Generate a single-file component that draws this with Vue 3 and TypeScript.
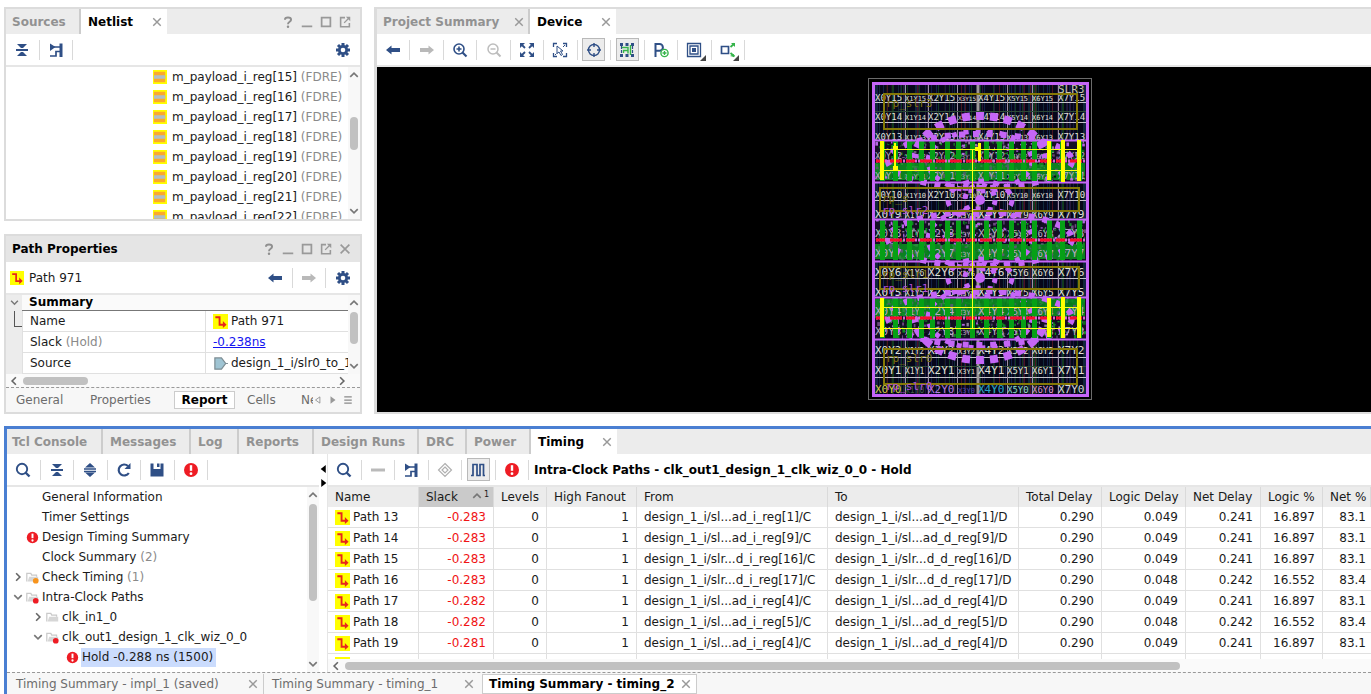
<script setup lang="ts">
import { h, ref } from 'vue'

const navy = '#2f4f86'
const glyphs: Record<string, string> = {
  collapse: `<path d="M3 2h10l-4 4H7zM3 14h10l-4-4H7z" fill="${navy}"/><path d="M2 8h12" stroke="${navy}" stroke-width="2"/>`,
  expand: `<path d="M8 1l5 4.500H3zM8 15l5-4.500H3z" fill="${navy}"/><path d="M2 7h12M2 9.500h12" stroke="${navy}" stroke-width="1.500"/>`,
  schematic: `<path d="M2 1.500l5.500 3.500L2 9z" fill="${navy}"/><path d="M6 5h7M2 14h6V9.500h5" fill="none" stroke="${navy}" stroke-width="1.700"/><path d="M13 1.500V15" stroke="${navy}" stroke-width="3"/>`,
  gear: `<path d="M8 1v14M1 8h14M3 3l10 10M13 3L3 13" stroke="${navy}" stroke-width="3"/><circle cx="8" cy="8" r="5" fill="${navy}"/><circle cx="8" cy="8" r="2.300" fill="#fff"/>`,
  back: `<path d="M1 8l5.500-4.500V6H15v4H6.500v2.500z" fill="${navy}"/>`,
  forward: `<path d="M15 8L9.500 3.500V6H1v4h8.500v2.500z" fill="#b9b9b9"/>`,
  zoomIn: `<circle cx="7" cy="7" r="5" fill="none" stroke="${navy}" stroke-width="1.600"/><path d="M4.500 7h5M7 4.500v5" stroke="${navy}" stroke-width="1.600"/><path d="M10.500 10.500l4 4" stroke="${navy}" stroke-width="2.200"/>`,
  zoomOut: `<circle cx="7" cy="7" r="5" fill="none" stroke="#bdbdbd" stroke-width="1.500"/><path d="M4.500 7h5" stroke="#bdbdbd" stroke-width="1.500"/><path d="M10.500 10.500l4 4" stroke="#bdbdbd" stroke-width="2"/>`,
  fit: `<path d="M1 1h5L1 6zM15 1v5l-5-5zM1 15v-5l5 5zM15 15h-5l5-5z" fill="${navy}"/><path d="M3 3l3 3M13 3l-3 3M3 13l3-3M13 13l-3-3" stroke="${navy}" stroke-width="1.800"/>`,
  selectZoom: `<path d="M1.500 5V1.500H5M11 1.500h3.500V5M14.500 11v3.500H11M5 14.500H1.500V11" fill="none" stroke="${navy}" stroke-width="1.300"/><path d="M5 4l6 5H8.500l2 3.500-1.500 1-2-3.500L5 11.500z" fill="#fff" stroke="${navy}"/><path d="M13 3l-2 2M3 13l1.500-1.500" stroke="${navy}"/>`,
  crosshair: `<circle cx="8" cy="8" r="5.500" fill="none" stroke="${navy}" stroke-width="1.400"/><path d="M8 1v4M8 11v4M1 8h4M11 8h4" stroke="${navy}" stroke-width="1.400"/>`,
  routing: `<path d="M1 1h3v3H1zM6.500 1h3v3h-3zM12 1h3v3h-3zM1 12h3v3H1zM6.500 12h3v3h-3zM12 12h3v3h-3z" fill="${navy}"/><path d="M2.500 4v8M13.500 4v8" stroke="${navy}" stroke-width="1.200" stroke-dasharray="3 1"/><path d="M3 5.500h6v6M9 8.500H4.500v2.500M11.500 3v10" fill="none" stroke="#35b44a" stroke-width="1.400"/>`,
  pblock: `<path d="M2.500 15V2h4a3.300 3.300 0 0 1 0 6.800h-4" fill="none" stroke="${navy}" stroke-width="2"/><circle cx="11.500" cy="11" r="3.600" fill="#fff" stroke="#35b44a" stroke-width="1.400"/><path d="M9.500 11h4M11.500 9v4" stroke="#35b44a" stroke-width="1.300"/>`,
  layers: `<path d="M1.500 1.500h13v13h-13zM4 4h8v8H4z" fill="none" stroke="${navy}" stroke-width="1.300"/><path d="M6 6h4v4H6z" fill="${navy}"/>`,
  share: `<path d="M1.500 4.500h7v7h-7z" fill="none" stroke="${navy}" stroke-width="1.700"/><path d="M14.500 1.500L10.500 5M10.500 11l4 3.500" stroke="#35b44a" stroke-width="1.800"/><path d="M15 1v4l-4-4zM10 14l4 1v-3z" fill="#35b44a"/>`,
  search: `<circle cx="7" cy="7" r="5.200" fill="none" stroke="${navy}" stroke-width="1.900"/><path d="M10.500 10.500l4 4" stroke="${navy}" stroke-width="2.400"/>`,
  refresh: `<path d="M12.800 11A5.500 5.500 0 1 1 12 4" fill="none" stroke="${navy}" stroke-width="2.200"/><path d="M14.500 1v6h-6z" fill="${navy}"/>`,
  save: `<path d="M1.500 1.500h3V7h7V1.500h3v13h-13z" fill="${navy}"/><path d="M8 1.500h2.500V5H8z" fill="${navy}"/>`,
  error: `<circle cx="8" cy="8" r="7" fill="#ee1c24"/><path d="M8 3.200v5.600" stroke="#fff" stroke-width="2.400"/><circle cx="8" cy="11.700" r="1.400" fill="#fff"/>`,
  minus: `<path d="M1 8h14" stroke="#bababa" stroke-width="3"/>`,
  diamond: `<path d="M8 1.500L14.500 8 8 14.500 1.500 8zM8 5l3 3-3 3-3-3z" fill="none" stroke="#b0b0b0" stroke-width="1.200"/>`,
  wave: `<path d="M1 13.500h2V2.500h4v11h3V2.500h3.500v11H15" fill="none" stroke="${navy}" stroke-width="1.700"/>`,
  path: `<path d="M0 0h16v16H0z" fill="#ff0"/><path d="M2.500 3.500H7v8h5" fill="none" stroke="#e8261c" stroke-width="2"/><path d="M10.500 7.500l4 4-4 3.500z" fill="#e8261c"/>`,
  cell: `<path d="M0 0h16v16H0z" fill="#ff0"/><path d="M1 2h13v12H1z" fill="#fba92c"/><path d="M1 6h13v4H1z" fill="#b0bfc5"/>`,
  port: `<path d="M2 2h7l4.500 6L9 14H2z" fill="#9fc4d3" stroke="#7c8c93" stroke-width="1.300"/><path d="M13 8h3" stroke="#7c8c93"/>`,
  folder: `<path d="M1 13V3h5l1 2h6v2" fill="none" stroke="#c9c9c9" stroke-width="1.500"/><path d="M4 7h11v6H2z" fill="#d6d6d6"/>`,
  folderRed: `<path d="M1 13V3h5l1 2h6v2" fill="none" stroke="#c9c9c9" stroke-width="1.500"/><path d="M4 7h11v6H2z" fill="#d6d6d6"/><circle cx="12" cy="12" r="3.500" fill="#ee1c24"/>`,
  folderOrange: `<path d="M1 13V3h5l1 2h6v2" fill="none" stroke="#c9c9c9" stroke-width="1.500"/><path d="M4 7h11v6H2z" fill="#d6d6d6"/><circle cx="12" cy="12" r="3.500" fill="#f7941d"/>`,
  help: `<path d="M4.500 5.500C4.500 2 11.500 2 11.500 5.500 11.500 8 8 7.500 8 10.500" fill="none" stroke="#8f8f8f" stroke-width="2.200"/><circle cx="8" cy="13.500" r="1.400" fill="#8f8f8f"/>`,
  minimize: `<path d="M2 13h12" stroke="#999" stroke-width="2"/>`,
  maximize: `<path d="M3 3h10v10H3z" fill="none" stroke="#999" stroke-width="2"/>`,
  float: `<path d="M8 3H3v10.500h10V9" fill="none" stroke="#999" stroke-width="1.800"/><path d="M7 9l5-5" stroke="#999" stroke-width="1.500"/><path d="M9 2h5v5z" fill="#999"/>`,
  close: `<path d="M3 3l10 10M13 3L3 13" stroke="#999" stroke-width="1.900"/>`,
  up: `<path d="M2 11l6-6 6 6" fill="none" stroke="#777" stroke-width="2.600"/>`,
  down: `<path d="M2 5l6 6 6-6" fill="none" stroke="#777" stroke-width="2.600"/>`,
  left: `<path d="M11 2L5 8l6 6" fill="none" stroke="#666" stroke-width="2.600"/>`,
  right: `<path d="M5 2l6 6-6 6" fill="none" stroke="#666" stroke-width="2.600"/>`,
  tabLeft: `<path d="M11 3v10L4 8z" fill="none" stroke="#888" stroke-width="1.300"/>`,
  tabRight: `<path d="M4 2v12l8-6z" fill="#999"/>`,
  menu: `<path d="M2 3h12M2 8h12M2 13h12" stroke="#8a8a8a" stroke-width="2"/>`,
  splitLeft: `<path d="M12 1v14L3 8z" fill="#000"/>`,
  splitRight: `<path d="M4 1v14l9-7z" fill="#000"/>`,
}
const Icon = (props: { name: string }) =>
  h('svg', { class: 'icon', viewBox: '0 0 16 16', 'aria-hidden': 'true', innerHTML: glyphs[props.name] })
Icon.props = ['name']

type Tool = { icon: string; label: string; on?: boolean; menu?: boolean }
const netTools: Tool[] = [
  { icon: 'collapse', label: 'Collapse all' },
  { icon: 'schematic', label: 'Schematic' },
]
const deviceTools: Tool[] = [
  { icon: 'back', label: 'Back' },
  { icon: 'forward', label: 'Forward' },
  { icon: 'zoomIn', label: 'Zoom in' },
  { icon: 'zoomOut', label: 'Zoom out' },
  { icon: 'fit', label: 'Zoom fit' },
  { icon: 'selectZoom', label: 'Zoom to selection' },
  { icon: 'crosshair', label: 'Autofit selection', on: true },
  { icon: 'routing', label: 'Routing resources', on: true },
  { icon: 'pblock', label: 'Draw Pblock' },
  { icon: 'layers', label: 'Cell drag mode', menu: true },
  { icon: 'share', label: 'Connections', menu: true },
]
const treeTools: Tool[] = [
  { icon: 'search', label: 'Search' },
  { icon: 'collapse', label: 'Collapse all' },
  { icon: 'expand', label: 'Expand all' },
  { icon: 'refresh', label: 'Rerun' },
  { icon: 'save', label: 'Save' },
  { icon: 'error', label: 'Show violations' },
]
const tableTools: Tool[] = [
  { icon: 'search', label: 'Search' },
  { icon: 'minus', label: 'Remove' },
  { icon: 'schematic', label: 'Schematic' },
  { icon: 'diamond', label: 'Mark' },
  { icon: 'wave', label: 'Waveform', on: true },
  { icon: 'error', label: 'Show failing' },
]
const winTools = [
  { icon: 'help', label: 'Help' },
  { icon: 'minimize', label: 'Minimize' },
  { icon: 'maximize', label: 'Maximize' },
  { icon: 'float', label: 'Float' },
]

const regs = [15, 16, 17, 18, 19, 20, 21, 22]
const timingTabs = [
  { name: 'Tcl Console', cls: 'w96' },
  { name: 'Messages', cls: 'w88' },
  { name: 'Log', cls: 'w48' },
  { name: 'Reports', cls: 'w75' },
  { name: 'Design Runs', cls: 'w105' },
  { name: 'DRC', cls: 'w48' },
  { name: 'Power', cls: 'w64' },
]
const tree = [
  { text: 'General Information', level: 0 },
  { text: 'Timer Settings', level: 0 },
  { text: 'Design Timing Summary', level: 0, icon: 'error' },
  { text: 'Clock Summary', count: '(2)', level: 0 },
  { text: 'Check Timing', count: '(1)', level: 0, icon: 'folderOrange', arrow: 'right' },
  { text: 'Intra-Clock Paths', level: 0, icon: 'folderRed', arrow: 'down' },
  { text: 'clk_in1_0', level: 1, icon: 'folder', arrow: 'right' },
  { text: 'clk_out1_design_1_clk_wiz_0_0', level: 1, icon: 'folderRed', arrow: 'down' },
  { text: 'Hold -0.288 ns (1500)', level: 2, icon: 'error' },
]
const selected = ref('Hold -0.288 ns (1500)')

const columns = ['Name', 'Slack', 'Levels', 'High Fanout', 'From', 'To', 'Total Delay', 'Logic Delay', 'Net Delay', 'Logic %', 'Net %']
const row = (n: number, slack: string, from: string, to: string, fast = false) => [
  `Path ${n}`, slack, '0', '1', `design_1_i/${from}/C`, `design_1_i/${to}/D`, '0.290',
  fast ? '0.048' : '0.049', fast ? '0.242' : '0.241', fast ? '16.552' : '16.897', fast ? '83.4' : '83.1',
]
const rows = [
  row(13, '-0.283', 'sl...ad_i_reg[1]', 'sl...ad_d_reg[1]'),
  row(14, '-0.283', 'sl...ad_i_reg[9]', 'sl...ad_d_reg[9]'),
  row(15, '-0.283', 'slr...d_i_reg[16]', 'slr...d_d_reg[16]'),
  row(16, '-0.283', 'slr...d_i_reg[17]', 'slr...d_d_reg[17]', true),
  row(17, '-0.282', 'sl...ad_i_reg[4]', 'sl...ad_d_reg[4]'),
  row(18, '-0.282', 'sl...ad_i_reg[5]', 'sl...ad_d_reg[5]', true),
  row(19, '-0.281', 'sl...ad_i_reg[4]', 'sl...ad_d_reg[4]'),
  ['', '', '', '', '', '', '', '', '', '', ''],
]
const isText = (i: number) => i === 0 || i === 4 || i === 5

/* Device floorplan */
let seed = 7
const rnd = () => {
  seed = (seed * 16807) % 2147483647
  return seed / 2147483647
}
const between = (a: number, b: number) => a + rnd() * (b - a)
const pick = (list: string[]) => list[Math.floor(rnd() * list.length)]

const fabric = Array.from({ length: 110 }, () => ({
  x: Math.round(between(875, 1086)),
  c: pick(['#12381c', '#121f48', '#4a1420', '#17173c', '#0f3a24', '#271838', '#141414', '#10283a']),
}))
const colLines = [905, 928, 957, 1007, 1032, 1058]
const rowLines = [102, 122, 200, 278, 357, 377]
const bands = [140, 219, 297]
const bars = [882, 895, 909, 921, 932, 947, 958, 972, 986, 999, 1011, 1023, 1034, 1049, 1062, 1079]
const bandNoise = bands.flatMap((top, b) =>
  Array.from({ length: 620 }, () => {
    const y = between(top, top + 39)
    const green = b === 0 ? y > top + 22 && y < top + 35 : b === 1 ? y > top + 24 : y < top + 18
    return {
      x: between(875, 1084),
      y,
      w: between(1, 3),
      h: between(1, 4),
      c: green ? pick(['#118c25', '#0a7a1c', '#2a8e3e', '#52606a']) : pick(['#b565e4', '#0f8a20', '#148a28', '#8f809c', '#140f24', '#0a0716', '#0f6a1c', '#6c4a80']),
    }
  }),
)
const greenFill = [
  { y: 163, h: 17 },
  { y: 244, h: 15 },
  { y: 299, h: 17 },
]
const rings = [161, 239, 318].flatMap((cy) => [
  { cy, rx: 92, ry: 27, w: 6, dash: '6 8' },
  { cy, rx: 52, ry: 30, w: 5, dash: '5 7' },
])
const arcs = ['M980 116A66 46 0 0 1 1046 158', 'M980 116A66 46 0 0 0 914 158', 'M980 360A66 46 0 0 0 1046 318', 'M980 360A66 46 0 0 1 914 318']
const hubs = [200, 278]
const labelCols = [
  { x: 875, long: 9, short: 11 }, { x: 905, long: 7, short: 8 }, { x: 928, long: 9, short: 11 }, { x: 958, long: 6, short: 7 },
  { x: 978, long: 9, short: 11 }, { x: 1007, long: 7, short: 9 }, { x: 1032, long: 7, short: 9 }, { x: 1058, long: 9, short: 11 },
]
const bottomColors = ['#d8cc3c', '#3f5a48', '#b47adf', '#5046b8', '#28a6c8', '#8fdcc8', '#dc96c8', '#d8d8d8']
const labels = Array.from({ length: 16 }, (_, y) => y).flatMap((y) =>
  labelCols.map((c, x) => ({
    text: `X${x}Y${y}`,
    x: c.x,
    y: 393 - y * 19.5,
    s: y > 9 ? c.long : c.short,
    c: y === 0 ? bottomColors[x] : [3, 4, 7, 8, 11, 12].includes(y) ? '#b8acc2' : '#e0e0d8',
  })),
)
const regions = [
  { x: 884, y: 94, w: 193, h: 35 },
  { x: 880, y: 188, w: 199, h: 23 },
  { x: 880, y: 267, w: 199, h: 22 },
  { x: 884, y: 349, w: 193, h: 35 },
]
const names = [
  { t: 'rp_slr3', x: 886, y: 107, c: '#80740c' },
  { t: 'rp_s', x: 882, y: 202, c: '#80740c' },
  { t: 'rp_slr2', x: 882, y: 214, c: '#b04fdc' },
  { t: 'rp_slr1', x: 882, y: 278, c: '#80740c' },
  { t: 'rp_slr1', x: 882, y: 292, c: '#b04fdc' },
  { t: 'rp_slr0', x: 886, y: 362, c: '#80740c' },
  { t: 'rp_slr0', x: 886, y: 390, c: '#b04fdc' },
]
const marks = [
  { x: 880, y: 141, w: 4, h: 39 }, { x: 894, y: 143, w: 2, h: 28 }, { x: 893, y: 146, w: 5, h: 4 }, { x: 893, y: 166, w: 5, h: 5 },
  { x: 978, y: 143, w: 3, h: 18 }, { x: 975, y: 147, w: 4, h: 4 }, { x: 1047, y: 141, w: 4, h: 39 }, { x: 1061, y: 140, w: 4, h: 42 },
  { x: 1077, y: 140, w: 4, h: 41 }, { x: 880, y: 298, w: 4, h: 39 }, { x: 1047, y: 298, w: 4, h: 39 }, { x: 1061, y: 297, w: 4, h: 41 },
  { x: 1077, y: 297, w: 4, h: 41 },
]
</script>

<template>
  <main class="app">
    <div class="top">
      <div class="side">
        <section class="panel">
          <header class="tabbar">
            <button class="tab w75">Sources</button>
            <div class="tab active w85">Netlist <button class="x" aria-label="Close Netlist"><Icon name="close" /></button></div>
            <div class="win">
              <button v-for="t in winTools" :key="t.icon" :aria-label="t.label"><Icon :name="t.icon" /></button>
            </div>
          </header>
          <div class="toolbar">
            <div class="tools two">
              <div v-for="t in netTools" :key="t.icon" class="cell"><button :aria-label="t.label"><Icon :name="t.icon" /></button></div>
            </div>
            <button class="settings" aria-label="Settings"><Icon name="gear" /></button>
          </div>
          <div class="scroll netlist">
            <ul class="regs">
              <li v-for="r in regs" :key="r"><Icon name="cell" /><span>m_payload_i_reg[{{ r }}] <span class="dim">(FDRE)</span></span></li>
            </ul>
            <div class="vbar"><Icon name="up" /><i class="thumb mid"></i><Icon name="down" /></div>
          </div>
        </section>

        <section class="panel props">
          <header class="tabbar titlebar">
            <h2>Path Properties</h2>
            <div class="win">
              <button v-for="t in winTools" :key="t.icon" :aria-label="t.label"><Icon :name="t.icon" /></button>
              <button aria-label="Close"><Icon name="close" /></button>
            </div>
          </header>
          <div class="toolbar">
            <span class="current"><Icon name="path" />Path 971</span>
            <div class="tools two nav">
              <div class="cell"><button aria-label="Previous"><Icon name="back" /></button></div>
              <div class="cell"><button aria-label="Next"><Icon name="forward" /></button></div>
            </div>
            <button class="settings" aria-label="Settings"><Icon name="gear" /></button>
          </div>
          <div class="scroll summary">
            <div class="gutter"><Icon name="down" /><i></i></div>
            <div class="details">
              <h3>Summary</h3>
              <table>
                <tbody>
                  <tr><th>Name</th><td><Icon name="path" />Path 971</td></tr>
                  <tr><th>Slack <span class="dim">(Hold)</span></th><td><a href="#">-0.238ns</a></td></tr>
                  <tr><th>Source</th><td><Icon name="port" />design_1_i/slr0_to_1</td></tr>
                </tbody>
              </table>
            </div>
            <div class="vbar"><Icon name="up" /><i class="thumb short"></i><Icon name="down" /></div>
          </div>
          <div class="hbar"><Icon name="left" /><i class="thumb h65"></i><Icon name="right" class="end" /></div>
          <nav class="subtabs">
            <button class="sub w74">General</button>
            <button class="sub w83">Properties</button>
            <button class="sub active">Report</button>
            <button class="sub w54">Cells</button>
            <button class="sub clip">Nets</button>
            <button class="pager" aria-label="Previous tab"><Icon name="tabLeft" /></button>
            <button class="pager" aria-label="Next tab"><Icon name="tabRight" /></button>
            <button class="pager" aria-label="All tabs"><Icon name="menu" /></button>
          </nav>
        </section>
      </div>

      <section class="panel device">
        <header class="tabbar">
          <div class="tab w153">Project Summary <button class="x" aria-label="Close Project Summary"><Icon name="close" /></button></div>
          <div class="tab active w85">Device <button class="x" aria-label="Close Device"><Icon name="close" /></button></div>
        </header>
        <div class="toolbar">
          <div class="tools eleven">
            <div v-for="t in deviceTools" :key="t.icon" class="cell">
              <button :aria-label="t.label" :class="{ on: t.on, menu: t.menu }"><Icon :name="t.icon" /></button>
            </div>
          </div>
        </div>
        <div class="canvas">
          <svg class="chip" viewBox="868 78 224 323" role="img" aria-label="Device floorplan">
            <rect x="868.500" y="78.500" width="223" height="321" fill="#000" stroke="#6c6c6c" />
            <rect x="873" y="83" width="215" height="313" fill="#06071a" />
            <path v-for="(f, i) in fabric" :key="'f' + i" :d="`M${f.x}.5 84V395`" :stroke="f.c" />
            <path v-for="y in rowLines" :key="'r' + y" :d="`M874 ${y}.5H1086`" stroke="#c6c4cc" />
            <path v-for="x in colLines" :key="'c' + x" :d="`M${x}.5 84V395`" stroke="#9c8fa4" />
            <path d="M978 84V395" stroke="#9d9797" stroke-width="3" />
            <path d="M874 111.500H1086M874 366.500H1086" stroke="#2d4a36" />
            <rect v-for="b in bands" :key="'b' + b" x="874" :y="b" width="212" height="42" fill="#140f24" />
            <rect v-for="g in greenFill" :key="'g' + g.y" x="875" :y="g.y" width="210" :height="g.h" fill="#0c8020" />
            <rect v-for="(n, i) in bandNoise" :key="'n' + i" :x="n.x" :y="n.y" :width="n.w" :height="n.h" :fill="n.c" />
            <text v-for="(l, i) in labels" :key="'l' + i" :x="l.x" :y="l.y" :font-size="l.s" :fill="l.c">{{ l.text }}</text>
            <g fill="none" stroke="#c566f7">
              <ellipse v-for="(r, i) in rings" :key="'e' + i" cx="980" :cy="r.cy" :rx="r.rx" :ry="r.ry" :stroke-width="r.w" :stroke-dasharray="r.dash" />
              <path v-for="a in arcs" :key="a" :d="a" stroke-width="8" stroke-dasharray="8 6" stroke-dashoffset="4" />
              <g v-for="y in hubs" :key="'k' + y">
                <circle cx="980" :cy="y" r="15" stroke-width="5" stroke-dasharray="5 7" />
                <ellipse cx="980" :cy="y" rx="32" ry="19" stroke-width="5" stroke-dasharray="6 9" />
              </g>
            </g>
            <g v-for="b in bands" :key="'m' + b">
              <rect v-for="x in bars" :key="x" :x="x - 2" :y="b" width="5" height="41" fill="#06a016" />
              <path :d="`M875 ${b}.500H1086M875 ${b + 42}.500H1086`" stroke="#c566f7" stroke-width="2" />
              <path :d="`M876 ${b + 21}H1086`" stroke="#dd62d2" stroke-width="3" stroke-dasharray="2 1" />
              <path :d="`M876 ${b + 21}H1086`" stroke="#f80d2c" stroke-width="3" stroke-dasharray="9 5 12 4" />
            </g>
            <text x="1058" y="93" font-size="11" fill="#c9c4b0">SLR3</text>
            <rect v-for="r in regions" :key="'p' + r.y" :x="r.x" :y="r.y" :width="r.w" :height="r.h" fill="none" stroke="#857806" stroke-width="2" />
            <text v-for="(n, i) in names" :key="'t' + i" :x="n.x" :y="n.y" font-size="11" :fill="n.c">{{ n.t }}</text>
            <circle v-for="y in hubs" :key="'h' + y" cx="980" :cy="y" r="5" fill="#c566f7" />
            <path d="M882 149.500H1078M882 170.500H1078M882 307.500H1078M882 328.500H1078M972.500 150V328" stroke="#ffff1a" fill="none" />
            <rect v-for="(m, i) in marks" :key="'y' + i" :x="m.x" :y="m.y" :width="m.w" :height="m.h" fill="#ff0" />
            <rect x="873.500" y="83.500" width="214" height="312" fill="none" stroke="#c566f7" stroke-width="3" />
          </svg>
        </div>
      </section>
    </div>

    <section class="timing">
      <header class="tabbar">
        <button v-for="t in timingTabs" :key="t.name" class="tab" :class="t.cls">{{ t.name }}</button>
        <div class="tab active w85">Timing <button class="x" aria-label="Close Timing"><Icon name="close" /></button></div>
      </header>
      <div class="split">
        <div class="left">
          <div class="toolbar">
            <div class="tools six">
              <div v-for="t in treeTools" :key="t.icon" class="cell"><button :aria-label="t.label"><Icon :name="t.icon" /></button></div>
            </div>
          </div>
          <div class="scroll fill">
            <ul class="tree">
              <li v-for="n in tree" :key="n.text" :class="'l' + n.level">
                <span class="slot"><Icon v-if="n.arrow" :name="n.arrow" class="chev" /></span>
                <span class="slot"><Icon v-if="n.icon" :name="n.icon" /></span>
                <button :class="{ sel: selected === n.text }" @click="selected = n.text">{{ n.text }} <span v-if="n.count" class="dim">{{ n.count }}</span></button>
              </li>
            </ul>
            <div class="vbar"><Icon name="up" /><i class="thumb long"></i><Icon name="down" /></div>
          </div>
        </div>
        <div class="divider"><Icon name="splitLeft" /><Icon name="splitRight" /></div>
        <div class="right">
          <div class="toolbar">
            <div class="tools six">
              <div v-for="t in tableTools" :key="t.icon" class="cell"><button :aria-label="t.label" :class="{ on: t.on }"><Icon :name="t.icon" /></button></div>
            </div>
            <h2 class="title">Intra-Clock Paths - clk_out1_design_1_clk_wiz_0_0 - Hold</h2>
          </div>
          <div class="tablebox">
            <table class="paths">
              <colgroup><col v-for="(c, i) in columns" :key="c" :class="'c' + i" /></colgroup>
              <thead>
                <tr>
                  <th v-for="(c, i) in columns" :key="c" :class="{ sorted: i === 1 }"><span>{{ c }}<em v-if="i === 1"><Icon name="up" /><small>1</small></em></span></th>
                </tr>
              </thead>
              <tbody>
                <tr v-for="(r, k) in rows" :key="k">
                  <td v-for="(v, i) in r" :key="i" :class="{ num: !isText(i), bad: i === 1 }"><Icon v-if="i === 0" name="path" />{{ v }}</td>
                </tr>
              </tbody>
            </table>
          </div>
          <div class="hbar"><Icon name="left" /><i class="thumb wide"></i></div>
        </div>
      </div>
      <nav class="subtabs results">
        <div class="sub r1"><button>Timing Summary - impl_1 (saved)</button><button class="x" aria-label="Close impl_1"><Icon name="close" /></button></div>
        <div class="sub r2"><button>Timing Summary - timing_1</button><button class="x" aria-label="Close timing_1"><Icon name="close" /></button></div>
        <div class="sub active r3"><button>Timing Summary - timing_2</button><button class="x" aria-label="Close timing_2"><Icon name="close" /></button></div>
      </nav>
    </section>
  </main>
</template>

<style>
body { margin: 0; background: #fff; }
.icon { display: block; flex: none; width: 14px; height: 14px; }
</style>

<style scoped>
* { box-sizing: border-box; }
.app { display: flex; flex-direction: column; gap: 12px; height: 100vh; padding: 7px 0 0 4px; overflow: hidden; font: 12px "DejaVu Sans", sans-serif; color: #1a1a1a; white-space: nowrap; }
button { padding: 0; border: 0; background: none; font: inherit; color: inherit; cursor: pointer; }
ul { margin: 0; padding: 0; list-style: none; }
h2, h3 { margin: 0; font-size: 12px; color: #000; }
.dim { color: #8a8a8a; }
.top { display: flex; flex: none; gap: 12px; }
.side { display: flex; flex: none; flex-direction: column; gap: 13px; width: 358px; }
.panel { display: flex; flex-direction: column; border: 2px solid #dcdcdc; background: #fff; }
.device { flex: 1; min-width: 0; border-left-width: 3px; border-right: 0; }
.tabbar { display: flex; flex: none; height: 25px; background: #ececec; font-weight: bold; }
.titlebar { align-items: center; height: 26px; padding-left: 6px; background: #e5e5e5; }
.tab { display: flex; flex: none; align-items: center; justify-content: space-between; padding: 0 3px 0 6px; border-right: 2px solid #ccc; color: #929292; text-align: left; }
.tab.active { border-right: 0; padding: 0 4px 0 7px; background: #fff; color: #000; }
.x .icon { width: 12px; height: 12px; }
.w48 { width: 48px; } .w64 { width: 64px; } .w75 { width: 75px; } .w85 { width: 86px; } .w88 { width: 88px; }
.w96 { width: 96px; } .w105 { width: 105px; } .w153 { width: 153px; }
.win { display: flex; align-items: center; gap: 5px; margin-left: auto; padding-right: 8px; }
.toolbar { display: flex; flex: none; align-items: center; height: 33px; border-bottom: 2px solid #e6e6e6; background: #fff; }
.tools { display: flex; flex: none; }
.two { width: 67px; } .six { width: 201px; } .eleven { width: 368px; }
.cell { display: flex; flex: 1; align-items: center; justify-content: center; height: 20px; border-right: 1px solid #d9d9d9; }
.cell button { position: relative; display: grid; place-items: center; flex: none; width: 23px; height: 23px; }
.cell .icon, .settings .icon { width: 16px; height: 16px; }
.cell .on { border: 1px solid #b9b9b9; background: #ececec; }
.menu::after { content: ""; position: absolute; right: 0; bottom: 0; border: 3px solid #444; border-top-color: transparent; border-left-color: transparent; }
.settings { margin-left: auto; margin-right: 9px; }
.scroll { display: flex; overflow: hidden; }
.netlist { height: 152px; }
.regs { flex: 1; min-width: 0; padding-left: 147px; overflow: hidden; }
.regs li { display: flex; align-items: center; gap: 5px; height: 20px; }
.vbar { display: flex; flex: none; flex-direction: column; align-items: center; justify-content: space-between; position: relative; width: 12px; padding: 3px 0; background: #f8f8f8; }
.vbar .icon { width: 10px; height: 10px; }
.thumb { position: absolute; border-radius: 4px; background: #c1c1c1; }
.vbar .thumb { right: 2px; width: 8px; }
.mid { top: 50px; height: 33px; }
.short { top: 17px; height: 32px; }
.long { top: 17px; height: 97px; }
.current { display: flex; align-items: center; gap: 5px; padding-left: 4px; }
.nav { margin-left: auto; }
.nav + .settings { margin-left: 9px; }
.summary { height: 79px; }
.gutter { display: flex; flex: none; flex-direction: column; align-items: center; width: 16px; padding-top: 3px; background: #ececec; }
.gutter .icon { width: 9px; height: 9px; }
.gutter i { width: 8px; height: 16px; margin: 4px 0 0 8px; border: solid #555; border-width: 0 0 1px 1px; }
.details { flex: 1; min-width: 0; overflow: hidden; }
.details h3 { height: 16px; padding-left: 7px; border-bottom: 1px solid #777; background: #fafafa; line-height: 15px; }
.details table { width: 100%; table-layout: fixed; border-spacing: 0; }
.details th, .details td { height: 21px; padding: 0 0 0 7px; border-bottom: 1px solid #e0e0e0; font-weight: normal; text-align: left; }
.details th { width: 184px; border-right: 1px solid #e0e0e0; border-left: 1px solid #e0e0e0; }
.details td { overflow: hidden; }
td .icon { display: inline-block; width: 15px; height: 15px; margin-right: 3px; vertical-align: middle; }
a { color: #1414f0; }
.hbar { position: relative; display: flex; flex: none; align-items: center; height: 13px; padding: 0 3px; background: #fafafa; }
.hbar .icon { width: 10px; height: 10px; }
.hbar .end { margin-left: auto; margin-right: 10px; }
.hbar .thumb { top: 3px; left: 17px; height: 8px; }
.h65 { width: 65px; }
.wide { right: 191px; }
.subtabs { display: flex; flex: none; align-items: center; height: 25px; border-top: 1px dashed #999; background: #f7f7f7; color: #6c6c6c; }
.sub { flex: none; height: 18px; text-align: left; }
.sub.active { border: 1px solid #ccc; background: #fff; color: #000; font-weight: bold; }
.props .subtabs { padding-left: 10px; }
.props .sub.active { width: 61px; text-align: center; }
.w74 { width: 74px; } .w83 { width: 84px; }
.props .sub.w54 { padding-left: 12px; width: 66px; }
.props .clip { width: 12px; overflow: hidden; }
.pager { margin-right: 5px; }
.pager .icon { width: 10px; height: 10px; }
.pager:last-child { margin: 0; }
.canvas { flex: 1; padding: 11px 0 0 49%; overflow: hidden; background: #000; }
.chip { display: block; width: 224px; height: 323px; margin-left: 4px; font-family: "DejaVu Sans Mono", monospace; }
.timing { display: flex; flex: 1; flex-direction: column; min-height: 0; border: solid #4a7fd2; border-width: 3px 0 0 3px; }
.timing .tab { padding-left: 7px; }
.timing .tab:first-child { padding-left: 5px; }
.split { display: flex; flex: 1; min-height: 0; }
.left { display: flex; flex: none; flex-direction: column; width: 312px; }
.fill { flex: 1; min-height: 0; }
.tree { flex: 1; min-width: 0; overflow: hidden; }
.tree li { display: flex; align-items: center; height: 20px; padding-left: 4px; }
.tree .l1 { padding-left: 24px; }
.tree .l2 { padding-left: 44px; }
.slot { flex: none; width: 15px; }
.slot .icon { width: 13px; height: 13px; }
.slot .chev { width: 10px; height: 10px; margin-left: 2px; }
.tree button { padding: 0 3px 0 1px; line-height: 19px; }
.tree .sel { background: #cbdcfd; }
.divider { display: flex; flex: none; flex-direction: column; gap: 4px; width: 9px; padding-top: 10px; border-right: 1px solid #e6e6e6; }
.divider .icon { width: 9px; height: 10px; }
.right { display: flex; flex: 1; flex-direction: column; min-width: 0; }
.title { padding-left: 5px; }
.tablebox { flex: 1; min-height: 0; overflow: hidden; }
.paths { width: 100%; table-layout: fixed; border-spacing: 0; }
.paths th { height: 20px; padding: 0 0 0 7px; border-right: 1px solid #dadada; background: #ececec; font-weight: normal; text-align: left; }
.paths .sorted { background: #cacaca; }
.paths th span { display: flex; justify-content: space-between; }
.paths em { display: flex; gap: 2px; padding-right: 4px; font-style: normal; }
.paths em .icon { width: 10px; height: 10px; margin-top: 1px; }
.paths small { font-size: 8px; line-height: 10px; }
.paths td { height: 21px; padding: 0 0 0 7px; border-right: 1px solid #e0e0e0; border-bottom: 1px solid #e0e0e0; overflow: hidden; }
.paths td.num { padding: 0 7px 0 0; text-align: right; }
.paths td.bad { color: #f01414; }
.paths td.num:last-child { padding-right: 5px; border-right: 0; }
.c0 { width: 91px; } .c1 { width: 75px; } .c2 { width: 53px; } .c3 { width: 90px; } .c4, .c5 { width: 191px; }
.c6 { width: 83px; } .c7 { width: 84px; } .c8 { width: 75px; } .c9 { width: 62px; }
.results { height: 22px; }
.results .sub { display: flex; align-items: center; justify-content: space-between; height: 20px; }
.r1 { width: 257px; padding: 0 4px 0 9px; border-right: 1px solid #ccc; }
.r2 { width: 218px; padding: 0 7px 0 8px; }
.r3 { width: 215px; padding: 0 4px 0 6px; }
</style>
